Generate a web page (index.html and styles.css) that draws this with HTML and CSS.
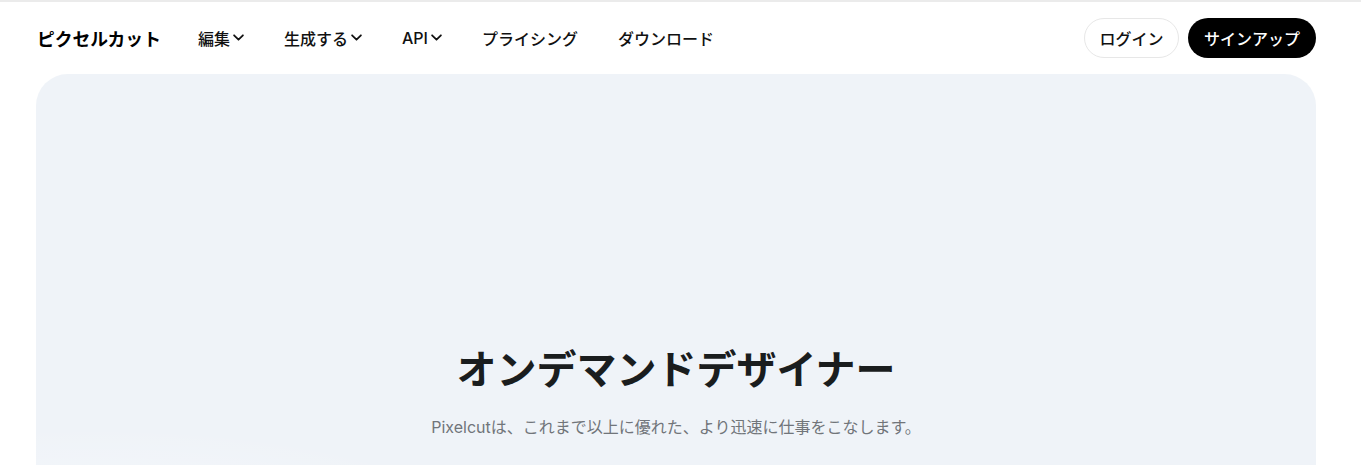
FILE: index.html
```html
<!DOCTYPE html>
<html lang="ja">
<head>
    <meta charset="UTF-8">
    <meta name="viewport" content="width=device-width, initial-scale=1.0">
    <title>ピクセルカット</title>
    <link rel="stylesheet" href="styles.css">
</head>
<body>
    <div class="page">
        <header class="header">
            <div class="logo">ピクセルカット</div>
            <nav class="nav">
                <a class="nav-item" href="#">編集<svg class="chevron" viewBox="0 0 10 6"><path d="M1 1l4 4 4-4"/></svg></a>
                <a class="nav-item" href="#">生成する<svg class="chevron" viewBox="0 0 10 6"><path d="M1 1l4 4 4-4"/></svg></a>
                <a class="nav-item" href="#">API<svg class="chevron" viewBox="0 0 10 6"><path d="M1 1l4 4 4-4"/></svg></a>
                <a class="nav-item" href="#">プライシング</a>
                <a class="nav-item" href="#">ダウンロード</a>
            </nav>
            <div class="actions">
                <a class="btn btn-login" href="#">ログイン</a>
                <a class="btn btn-signup" href="#">サインアップ</a>
            </div>
        </header>

        <section class="hero">
            <h1 class="hero-title">オンデマンドデザイナー</h1>
            <p class="hero-text">Pixelcutは、これまで以上に優れた、より迅速に仕事をこなします。</p>
        </section>
    </div>
</body>
</html>
```

FILE: styles.css
```css
body {
    margin: 0;
    background-color: #fff;
    border-top: 2px solid #ebebeb;
    font-family: 'Inter', 'Noto Sans CJK JP', sans-serif;
    color: #111;
    overflow: hidden;
}
.page {
    width: 1280px;
    margin-left: 36px;
}
.header {
    display: flex;
    align-items: center;
    height: 71px;
    padding-bottom: 1px;
}
.logo {
    font-size: 17.8px;
    font-weight: 700;
    padding-left: 1px;
    margin-right: 37px;
    color: #000;
}
.nav {
    display: flex;
    align-items: center;
    gap: 40px;
}
.nav-item {
    display: flex;
    align-items: center;
    gap: 3px;
    font-size: 16px;
    font-weight: 500;
    color: #111;
    text-decoration: none;
}
.chevron {
    width: 11px;
    height: 7px;
    fill: none;
    stroke: #111;
    stroke-width: 1.6;
    stroke-linecap: round;
    stroke-linejoin: round;
}
.actions {
    margin-left: auto;
    display: flex;
    gap: 9px;
}
.btn {
    display: flex;
    align-items: center;
    justify-content: center;
    height: 40px;
    box-sizing: border-box;
    padding: 0 14.5px;
    border-radius: 20px;
    font-size: 16px;
    font-weight: 500;
    text-decoration: none;
}
.btn-login {
    border: 1px solid #e7e7e7;
    color: #111;
    background-color: #fff;
}
.btn-signup {
    background-color: #000;
    color: #fff;
    padding: 0 16px;
}
.hero {
    height: 600px;
    box-sizing: border-box;
    padding-top: 272px;
    border-radius: 32px;
    background-color: #eff3f8;
    background-image: radial-gradient(ellipse 420px 120px at 60px 470px, rgba(255, 255, 255, 0.45), rgba(255, 255, 255, 0));
    text-align: center;
}
.hero-title {
    margin: 0;
    font-size: 40px;
    line-height: 48px;
    font-weight: 700;
    color: #1a1d1e;
}
.hero-text {
    margin: 21px 0 0;
    font-size: 16px;
    line-height: 24px;
    color: #71757a;
}
```
